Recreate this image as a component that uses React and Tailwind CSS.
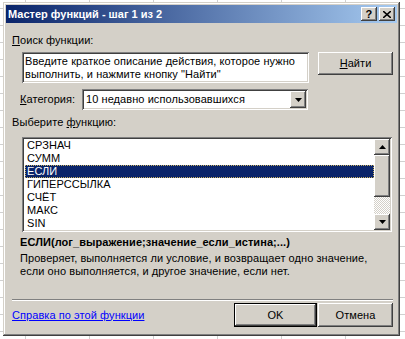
const raised = "shadow-[inset_-1px_-1px_#404040,inset_1px_1px_#fff,inset_-2px_-2px_#808080,inset_2px_2px_#d4d0c8]";
const sunken = "shadow-[inset_1px_1px_#808080,inset_-1px_-1px_#fff,inset_2px_2px_#404040,inset_-2px_-2px_#d4d0c8]";

const items = ["СРЗНАЧ", "СУММ", "ЕСЛИ", "ГИПЕРССЫЛКА", "СЧЁТ", "МАКС", "SIN"];

function Arrow({ up }) {
  return (
    <svg width="7" height="4" viewBox="0 0 7 4" className={up ? "" : "rotate-180"}>
      <path d="M3.5 0 L7 4 L0 4 Z" fill="#000" />
    </svg>
  );
}

export default function App() {
  return (
    <div
      className="w-[405px] h-[339px] overflow-hidden bg-white pt-[2px] pl-[3px] bg-[linear-gradient(90deg,#d0d0d0_1px,transparent_1px),linear-gradient(#d0d0d0_1px,transparent_1px)] bg-[size:64px_17px] bg-[position:25px_8px]"
      style={{ fontFamily: '"Liberation Sans", Arial, sans-serif' }}
    >
      <div className="w-[397px] h-[334px] bg-[#d4d0c8] p-[3px] text-[11px] leading-[13px] tracking-[0.07px] text-black shadow-[inset_-1px_-1px_#404040,inset_1px_1px_#d4d0c8,inset_-2px_-2px_#808080,inset_2px_2px_#fff]">
        {/* title bar */}
        <div className="h-[18px] flex items-center pl-[2px] pr-[2px] bg-[linear-gradient(90deg,#0a246a,#a6caf0)]">
          <span className="text-white font-bold text-[11px] tracking-normal flex-1">Мастер функций - шаг 1 из 2</span>
          <div className="flex gap-[2px]">
            <div className={`w-[16px] h-[14px] bg-[#d4d0c8] flex items-center justify-center font-bold text-[11px] leading-none ${raised}`}>?</div>
            <div className={`w-[16px] h-[14px] bg-[#d4d0c8] flex items-center justify-center ${raised}`}>
              <svg width="8" height="7" viewBox="0 0 8 7">
                <path d="M0 0 L8 7 M8 0 L0 7" stroke="#000" strokeWidth="1.6" />
              </svg>
            </div>
          </div>
        </div>

        <div className="mt-[11px] ml-[6px]"><u>П</u>оиск функции:</div>

        <div className="mt-[5px] flex items-start">
          <div className={`ml-[16px] w-[287px] h-[31px] bg-white pl-[3px] pt-[3px] leading-[13px] ${sunken}`}>
            Введите краткое описание действия, которое нужно<br />выполнить, и нажмите кнопку "Найти"
          </div>
          <div className={`ml-[9px] w-[75px] h-[23px] flex items-center justify-center ${raised}`}>
            <span><u>Н</u>айти</span>
          </div>
        </div>

        <div className="mt-[6px] flex items-center">
          <span className="ml-[14px] w-[62px]"><u>К</u>атегория:</span>
          <div className={`w-[226px] h-[21px] bg-white flex items-center pl-[4px] pr-[2px] ${sunken}`}>
            <span className="flex-1">10 недавно использовавшихся</span>
            <div className={`w-[16px] h-[17px] bg-[#d4d0c8] flex items-center justify-center ${raised}`}>
              <Arrow />
            </div>
          </div>
        </div>

        <div className="mt-[6px] ml-[6px]">Выберите <u>ф</u>ункцию:</div>

        <div className={`mt-[8px] ml-[16px] w-[370px] h-[95px] bg-white p-[2px] flex ${sunken}`}>
          <div className="flex-1 pl-[1px]">
            {items.map((it) => (
              <div
                key={it}
                className={`h-[13px] pl-[2px] ${it === "ЕСЛИ" ? "bg-[#0a246a] text-white outline-1 outline-dotted outline-offset-[-1px] outline-[#c8b060]" : ""}`}
              >
                {it}
              </div>
            ))}
          </div>
          <div className="w-[16px] flex flex-col">
            <div className={`h-[16px] bg-[#d4d0c8] flex items-center justify-center ${raised}`}><Arrow up /></div>
            <div className={`h-[42px] bg-[#d4d0c8] ${raised}`} />
            <div className="flex-1 bg-[repeating-conic-gradient(#d4d0c8_0_25%,#fff_0_50%)] bg-[size:2px_2px]" />
            <div className={`h-[16px] bg-[#d4d0c8] flex items-center justify-center ${raised}`}><Arrow /></div>
          </div>
        </div>

        <div className="mt-[4px] ml-[14px] font-bold">ЕСЛИ(лог_выражение;значение_если_истина;...)</div>
        <div className="mt-[3px] ml-[14px]">
          Проверяет, выполняется ли условие, и возвращает одно значение,<br />
          если оно выполняется, и другое значение, если нет.
        </div>

        <div className="mt-[21px] ml-[6px] w-[381px] h-[2px] border-t border-t-[#808080] border-b border-b-white" />

        <div className="mt-[2px] flex items-center h-[24px]">
          <span className="ml-[6px] text-[#0000ff] underline w-[222px]">Справка по этой функции</span>
          <div className="w-[83px] h-[24px] border border-black">
            <div className={`w-full h-full flex items-center justify-center ${raised}`}>OK</div>
          </div>
          <div className={`ml-[1px] w-[75px] h-[24px] flex items-center justify-center ${raised}`}>Отмена</div>
        </div>
      </div>
    </div>
  );
}
